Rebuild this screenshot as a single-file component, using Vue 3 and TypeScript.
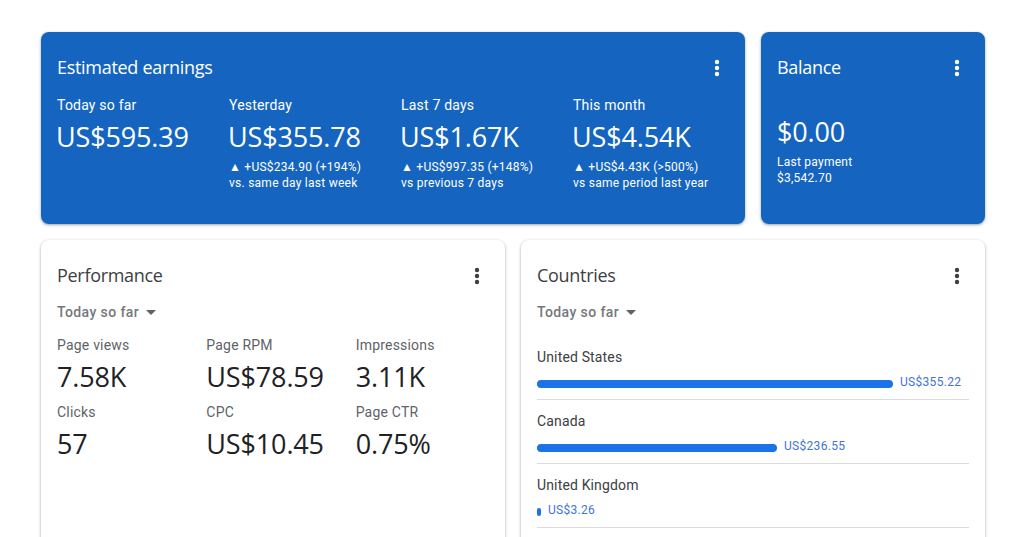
<script setup lang="ts">
interface Earn { label: string; value: string; delta?: string; note?: string }
const earnings: Earn[] = [
  { label: 'Today so far', value: 'US$595.39' },
  { label: 'Yesterday', value: 'US$355.78', delta: '▲ +US$234.90 (+194%)', note: 'vs. same day last week' },
  { label: 'Last 7 days', value: 'US$1.67K', delta: '▲ +US$997.35 (+148%)', note: 'vs previous 7 days' },
  { label: 'This month', value: 'US$4.54K', delta: '▲ +US$4.43K (>500%)', note: 'vs same period last year' },
]
const metrics = [
  { label: 'Page views', value: '7.58K' },
  { label: 'Page RPM', value: 'US$78.59' },
  { label: 'Impressions', value: '3.11K' },
  { label: 'Clicks', value: '57' },
  { label: 'CPC', value: 'US$10.45' },
  { label: 'Page CTR', value: '0.75%' },
]
const countries = [
  { name: 'United States', amount: 'US$355.22', width: 356 },
  { name: 'Canada', amount: 'US$236.55', width: 240 },
  { name: 'United Kingdom', amount: 'US$3.26', width: 4 },
]
</script>

<template>
  <main class="page">
    <section class="row top">
      <article class="card blue earnings">
        <header class="head">
          <h2>Estimated earnings</h2>
          <svg class="more" viewBox="0 0 4 16" width="4" height="16"><circle cx="2" cy="2" r="2.2"/><circle cx="2" cy="8" r="2.2"/><circle cx="2" cy="14" r="2.2"/></svg>
        </header>
        <div class="earn-grid">
          <div v-for="e in earnings" :key="e.label" class="earn">
            <div class="earn-label">{{ e.label }}</div>
            <div class="earn-value">{{ e.value }}</div>
            <div v-if="e.delta" class="earn-note">{{ e.delta }}<br />{{ e.note }}</div>
          </div>
        </div>
      </article>
      <article class="card blue balance">
        <header class="head">
          <h2>Balance</h2>
          <svg class="more" viewBox="0 0 4 16" width="4" height="16"><circle cx="2" cy="2" r="2.2"/><circle cx="2" cy="8" r="2.2"/><circle cx="2" cy="14" r="2.2"/></svg>
        </header>
        <div class="bal-value">$0.00</div>
        <div class="earn-note">Last payment<br />$3,542.70</div>
      </article>
    </section>
    <section class="row bottom">
      <article class="card white">
        <header class="head">
          <h2>Performance</h2>
          <svg class="more" viewBox="0 0 4 16" width="4" height="16"><circle cx="2" cy="2" r="2.2"/><circle cx="2" cy="8" r="2.2"/><circle cx="2" cy="14" r="2.2"/></svg>
        </header>
        <div class="range">Today so far <span class="caret"></span></div>
        <div class="metric-grid">
          <div v-for="m in metrics" :key="m.label">
            <div class="metric-label">{{ m.label }}</div>
            <div class="metric-value">{{ m.value }}</div>
          </div>
        </div>
      </article>
      <article class="card white">
        <header class="head">
          <h2>Countries</h2>
          <svg class="more" viewBox="0 0 4 16" width="4" height="16"><circle cx="2" cy="2" r="2.2"/><circle cx="2" cy="8" r="2.2"/><circle cx="2" cy="14" r="2.2"/></svg>
        </header>
        <div class="range">Today so far <span class="caret"></span></div>
        <ul class="countries">
          <li v-for="c in countries" :key="c.name" class="country">
            <div class="country-name">{{ c.name }}</div>
            <div class="bar-line">
              <span class="bar" :style="{ width: c.width + 'px' }"></span>
              <span class="amount">{{ c.amount }}</span>
            </div>
          </li>
        </ul>
      </article>
    </section>
  </main>
</template>

<style>
html, body { margin: 0; height: 537px; overflow: hidden; background: #fff; }
</style>

<style scoped>
.page {
  box-sizing: border-box;
  width: 1014px;
  height: 537px;
  overflow: hidden;
  padding: 32px 29px 0 41px;
  font-family: Roboto, sans-serif;
}
.row { display: flex; gap: 16px; }
.row.top { height: 192px; }
.row.bottom { margin-top: 16px; height: 400px; }
.row.bottom .card { flex: 1 1 0; min-width: 0; }
.card {
  box-sizing: border-box;
  border-radius: 8px;
  padding: 24px 16px 0;
}
.blue {
  background: #1565c0;
  color: #fff;
  box-shadow: 0 1px 2px rgba(60,64,67,.3), 0 1px 3px 1px rgba(60,64,67,.15);
}
.white {
  background: #fff;
  color: #3c4043;
  box-shadow: 0 1px 2px rgba(60,64,67,.3), 0 1px 3px 1px rgba(60,64,67,.15);
}
.earnings { width: 704px; }
.balance { width: 224px; }
.head {
  display: flex;
  justify-content: space-between;
  align-items: center;
  height: 24px;
  padding-right: 10px;
}
.head h2 {
  margin: -2px 0 0;
  font-family: "Open Sans", sans-serif;
  font-size: 18px;
  font-weight: 400;
  line-height: 24px;
  letter-spacing: -.3px;
}
.more { fill: currentColor; overflow: visible; }
.earn-grid { display: grid; grid-template-columns: repeat(4, 172px); margin-top: 15px; }
.earn-label { font-size: 14px; line-height: 20px; font-weight: 400; letter-spacing: .2px; }
.earn-value {
  font-family: "Open Sans", sans-serif;
  font-size: 27px;
  line-height: 36px;
  margin: 4px 0 0 -1px;
  letter-spacing: -.15px;
}
.earn-note { font-size: 12px; line-height: 16px; margin-top: 4px; font-weight: 400; letter-spacing: .25px; }
.bal-value {
  font-family: "Open Sans", sans-serif;
  font-size: 27px;
  line-height: 36px;
  margin-top: 34px;
  letter-spacing: -.15px;
}
.balance .earn-note { margin-top: 4px; }
.range {
  display: flex;
  align-items: center;
  margin-top: 14px;
  font-size: 14px;
  line-height: 20px;
  font-weight: 500;
  color: #75787c;
  letter-spacing: .4px;
  white-space: pre;
}
.caret {
  width: 0;
  height: 0;
  margin-left: 3px;
  border-left: 5px solid transparent;
  border-right: 5px solid transparent;
  border-top: 5px solid #5f6368;
}
.metric-grid {
  display: grid;
  grid-template-columns: repeat(3, 149.33px);
  row-gap: 7px;
  margin-top: 13px;
}
.metric-label { font-size: 14px; line-height: 20px; color: #5f6368; letter-spacing: .2px; }
.metric-value {
  font-family: "Open Sans", sans-serif;
  font-size: 27px;
  line-height: 36px;
  margin-top: 4px;
  color: #202124;
  letter-spacing: -.15px;
}
.countries { list-style: none; margin: 14px 0 0; padding: 0; }
.country {
  box-sizing: border-box;
  height: 64px;
  border-bottom: 1px solid #dadce0;
  padding-top: 11px;
}
.country-name { font-size: 14px; line-height: 20px; color: #3c4043; letter-spacing: .15px; }
.bar-line { display: flex; align-items: center; gap: 7px; margin-top: 5px; height: 20px; }
.bar { display: block; height: 8px; border-radius: 4px; background: #1a73e8; margin-top: 3px; }
.amount { font-size: 12px; line-height: 16px; color: #4272db; letter-spacing: .3px; }
</style>
